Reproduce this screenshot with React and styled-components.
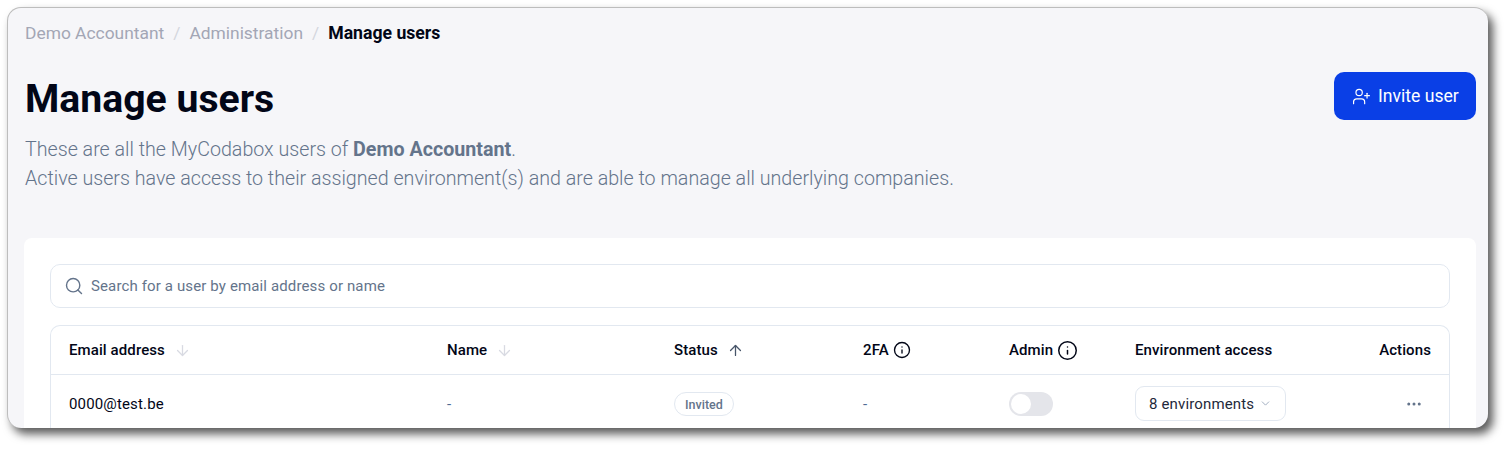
import React from 'react';
import styled, { createGlobalStyle } from 'styled-components';
import { ArrowDown, ArrowUp, ChevronDown, Ellipsis, Info, Search, UserPlus } from 'lucide-react';

const GlobalStyle = createGlobalStyle`
  html, body {
    margin: 0;
    padding: 0;
    background: #fff;
    font-family: Roboto, "Liberation Sans", sans-serif;
  }
`;

const Stage = styled.div`
  padding: 7px 24px 0 7px;
  height: 452px;
  box-sizing: border-box;
`;

const Window = styled.main`
  height: 421px;
  box-sizing: border-box;
  padding: 0 12px 0 16px;
  overflow: hidden;
  background: #f6f6f9;
  border-top: 1px solid #bdbdbd;
  border-left: 1px solid #bdbdbd;
  border-radius: 14px;
  box-shadow: 5px 6px 10px rgba(0, 0, 0, 0.65);
`;

const Breadcrumbs = styled.nav`
  display: flex;
  align-items: center;
  height: 49px;
  padding-left: 1px;
  font-size: 17.4px;
  color: #a3a6b5;
`;

const Separator = styled.span`
  margin: 0 9px;
  color: #d4d6de;
`;

const Current = styled.span`
  font-weight: 700;
  font-size: 17.65px;
  color: #020617;
`;

const Header = styled.header`
  display: flex;
  justify-content: space-between;
  align-items: flex-start;
  padding: 15px 0 0 1px;
`;

const Title = styled.h1`
  margin: 1px 0 0;
  font-size: 39.2px;
  line-height: 52px;
  font-weight: 700;
  color: #020617;
`;

const InviteButton = styled.button`
  display: flex;
  align-items: center;
  gap: 7px;
  width: 142px;
  height: 48px;
  padding: 0 0 0 18px;
  border: 0;
  border-radius: 10px;
  background: #0a3fe6;
  color: #fff;
  font: 400 17.6px Roboto, sans-serif;
`;

const Intro = styled.p`
  margin: 10px 0 0 1px;
  font-size: 19.66px;
  font-weight: 300;
  line-height: 29px;
  color: #64748b;

  strong {
    font-weight: 700;
  }
`;

const Card = styled.section`
  margin-top: 45px;
  padding: 26px 26px 0;
  height: 200px;
  background: #fff;
  border-radius: 8px 8px 0 0;
`;

const SearchBox = styled.div`
  display: flex;
  align-items: center;
  gap: 7px;
  height: 44px;
  box-sizing: border-box;
  padding: 0 13px;
  border: 1px solid #e2e8f0;
  border-radius: 10px;
  font-size: 15px;
  letter-spacing: 0.13px;
  color: #64748b;
`;

const Table = styled.div`
  margin-top: 17px;
  border: 1px solid #e2e8f0;
  border-bottom: 0;
  border-radius: 10px 10px 0 0;
`;

const Row = styled.div`
  display: grid;
  grid-template-columns: 378px 227px 189px 146px 126px 1fr auto;
  align-items: center;
  height: ${p => p.$height}px;
  padding: 0 18px;
  font-size: 15px;
  letter-spacing: 0.15px;
  color: #020617;
  border-top: ${p => (p.$divider ? '1px solid #e2e8f0' : '0')};
`;

const HeadCell = styled.div`
  display: flex;
  align-items: center;
  gap: ${p => p.$gap || 5}px;
  font-weight: 500;
  letter-spacing: 0.1px;
`;

const Muted = styled.span`
  color: #4f6b94;
`;

const Badge = styled.span`
  justify-self: start;
  height: 24px;
  box-sizing: border-box;
  padding: 1px 10px 0;
  display: flex;
  align-items: center;
  border: 1px solid #e2e8f0;
  border-radius: 12px;
  font-size: 12.5px;
  font-weight: 500;
  letter-spacing: 0;
  color: #64748b;
`;

const Toggle = styled.span`
  display: block;
  width: 44px;
  height: 24px;
  padding: 2px;
  box-sizing: border-box;
  border-radius: 12px;
  background: #e4e5ea;

  &::before {
    content: '';
    display: block;
    width: 20px;
    height: 20px;
    border-radius: 50%;
    background: #fff;
  }
`;

const EnvSelect = styled.button`
  justify-self: start;
  display: flex;
  align-items: center;
  gap: 5px;
  height: 35px;
  padding: 0 13px;
  background: #fff;
  border: 1px solid #e2e8f0;
  border-radius: 9px;
  font: 400 15px Roboto, sans-serif;
  letter-spacing: 0.15px;
  color: #1e293b;
`;

const ActionsCell = styled.span`
  display: flex;
  justify-content: flex-end;
  padding-right: 8px;
  color: #64748b;
`;

export default function App() {
  return (
    <Stage>
      <GlobalStyle />
      <Window>
        <Breadcrumbs>
          Demo Accountant
          <Separator>/</Separator>
          Administration
          <Separator>/</Separator>
          <Current>Manage users</Current>
        </Breadcrumbs>
        <Header>
          <Title>Manage users</Title>
          <InviteButton>
            <UserPlus size={19} strokeWidth={1.5} />
            Invite user
          </InviteButton>
        </Header>
        <Intro>
          These are all the MyCodabox users of <strong>Demo Accountant</strong>.
          <br />
          Active users have access to their assigned environment(s) and are able to manage all underlying companies.
        </Intro>
        <Card>
          <SearchBox>
            <Search size={20} strokeWidth={1.7} />
            Search for a user by email address or name
          </SearchBox>
          <Table>
            <Row $height={48}>
              <HeadCell $gap={9}>Email address <ArrowDown size={17} strokeWidth={1.8} color="#d8dae2" /></HeadCell>
              <HeadCell $gap={9}>Name <ArrowDown size={17} strokeWidth={1.8} color="#d8dae2" /></HeadCell>
              <HeadCell $gap={9}>Status <ArrowUp size={17} strokeWidth={1.8} color="#475569" /></HeadCell>
              <HeadCell $gap={4}>2FA <Info size={18} strokeWidth={1.8} /></HeadCell>
              <HeadCell $gap={4}>Admin <Info size={21} strokeWidth={1.7} /></HeadCell>
              <HeadCell>Environment access</HeadCell>
              <HeadCell>Actions</HeadCell>
            </Row>
            <Row $height={57} $divider>
              <span>0000@test.be</span>
              <Muted>-</Muted>
              <Badge>Invited</Badge>
              <Muted>-</Muted>
              <Toggle />
              <EnvSelect>8 environments <ChevronDown size={13} strokeWidth={1.6} color="#94a3b8" /></EnvSelect>
              <ActionsCell><Ellipsis size={18} /></ActionsCell>
            </Row>
          </Table>
        </Card>
      </Window>
    </Stage>
  );
}
